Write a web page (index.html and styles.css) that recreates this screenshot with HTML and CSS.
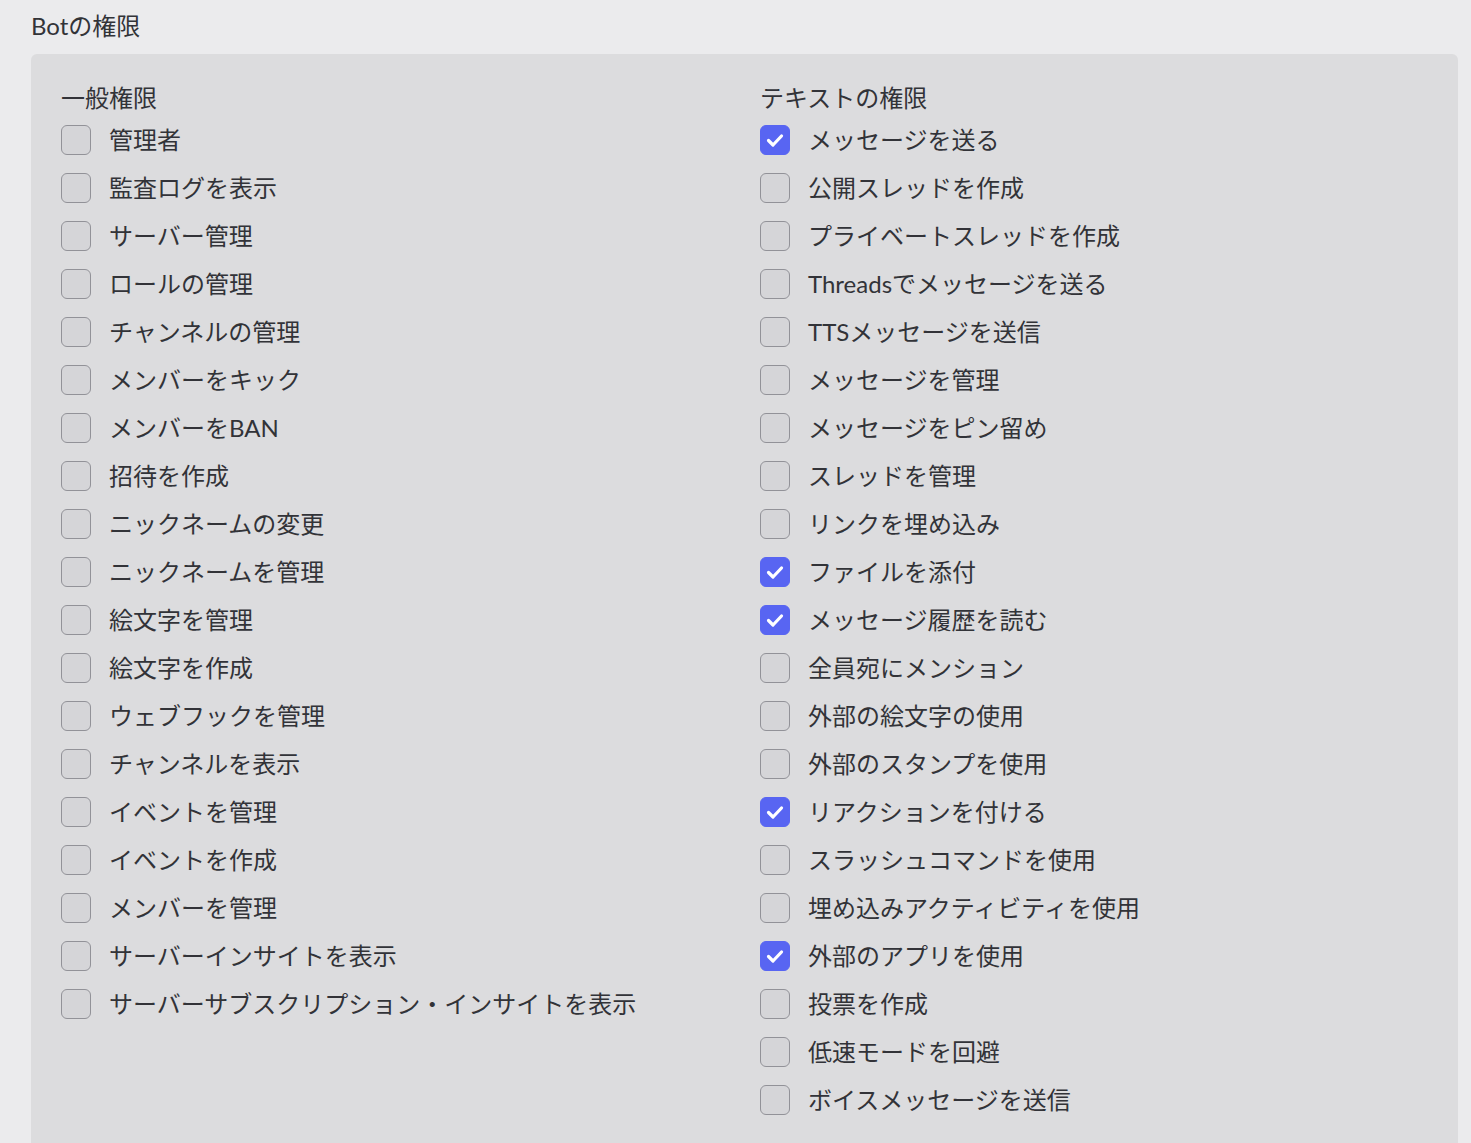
FILE: index.html
```html
<!DOCTYPE html>
<html lang="ja">
<head>
    <meta charset="UTF-8">
    <meta name="viewport" content="width=device-width, initial-scale=1.0">
    <title>Botの権限</title>
    <link rel="stylesheet" href="styles.css">
</head>
<body>
    <h2 class="title">Botの権限</h2>

    <div class="panel">
        <div class="column">
            <h3 class="column-title">一般権限</h3>
            <label class="perm"><input type="checkbox"><span>管理者</span></label>
            <label class="perm"><input type="checkbox"><span>監査ログを表示</span></label>
            <label class="perm"><input type="checkbox"><span>サーバー管理</span></label>
            <label class="perm"><input type="checkbox"><span>ロールの管理</span></label>
            <label class="perm"><input type="checkbox"><span>チャンネルの管理</span></label>
            <label class="perm"><input type="checkbox"><span>メンバーをキック</span></label>
            <label class="perm"><input type="checkbox"><span>メンバーをBAN</span></label>
            <label class="perm"><input type="checkbox"><span>招待を作成</span></label>
            <label class="perm"><input type="checkbox"><span>ニックネームの変更</span></label>
            <label class="perm"><input type="checkbox"><span>ニックネームを管理</span></label>
            <label class="perm"><input type="checkbox"><span>絵文字を管理</span></label>
            <label class="perm"><input type="checkbox"><span>絵文字を作成</span></label>
            <label class="perm"><input type="checkbox"><span>ウェブフックを管理</span></label>
            <label class="perm"><input type="checkbox"><span>チャンネルを表示</span></label>
            <label class="perm"><input type="checkbox"><span>イベントを管理</span></label>
            <label class="perm"><input type="checkbox"><span>イベントを作成</span></label>
            <label class="perm"><input type="checkbox"><span>メンバーを管理</span></label>
            <label class="perm"><input type="checkbox"><span>サーバーインサイトを表示</span></label>
            <label class="perm"><input type="checkbox"><span>サーバーサブスクリプション・インサイトを表示</span></label>
        </div>

        <div class="column">
            <h3 class="column-title">テキストの権限</h3>
            <label class="perm"><input type="checkbox" checked><span>メッセージを送る</span></label>
            <label class="perm"><input type="checkbox"><span>公開スレッドを作成</span></label>
            <label class="perm"><input type="checkbox"><span>プライベートスレッドを作成</span></label>
            <label class="perm"><input type="checkbox"><span>Threadsでメッセージを送る</span></label>
            <label class="perm"><input type="checkbox"><span>TTSメッセージを送信</span></label>
            <label class="perm"><input type="checkbox"><span>メッセージを管理</span></label>
            <label class="perm"><input type="checkbox"><span>メッセージをピン留め</span></label>
            <label class="perm"><input type="checkbox"><span>スレッドを管理</span></label>
            <label class="perm"><input type="checkbox"><span>リンクを埋め込み</span></label>
            <label class="perm"><input type="checkbox" checked><span>ファイルを添付</span></label>
            <label class="perm"><input type="checkbox" checked><span>メッセージ履歴を読む</span></label>
            <label class="perm"><input type="checkbox"><span>全員宛にメンション</span></label>
            <label class="perm"><input type="checkbox"><span>外部の絵文字の使用</span></label>
            <label class="perm"><input type="checkbox"><span>外部のスタンプを使用</span></label>
            <label class="perm"><input type="checkbox" checked><span>リアクションを付ける</span></label>
            <label class="perm"><input type="checkbox"><span>スラッシュコマンドを使用</span></label>
            <label class="perm"><input type="checkbox"><span>埋め込みアクティビティを使用</span></label>
            <label class="perm"><input type="checkbox" checked><span>外部のアプリを使用</span></label>
            <label class="perm"><input type="checkbox"><span>投票を作成</span></label>
            <label class="perm"><input type="checkbox"><span>低速モードを回避</span></label>
            <label class="perm"><input type="checkbox"><span>ボイスメッセージを送信</span></label>
        </div>
    </div>
</body>
</html>
```

FILE: styles.css
```css
body {
    margin: 0;
    padding: 12px 13px 0 31px;
    background-color: #ebebed;
    color: #323338;
    font-family: Lato, "Noto Sans CJK JP", sans-serif;
    overflow: hidden;
    height: 1143px;
    box-sizing: border-box;
}
.title {
    margin: 0 0 14px;
    font-size: 24px;
    font-weight: normal;
    line-height: 28px;
}
.panel {
    display: grid;
    grid-template-columns: 699px 1fr;
    padding: 30px 30px 60px;
    background-color: #dcdcde;
    border-radius: 6px 6px 0 0;
}
.column-title {
    margin: 0 0 4px;
    font-size: 24px;
    font-weight: normal;
    line-height: 28px;
}
.perm {
    display: flex;
    align-items: center;
    height: 48px;
    font-size: 24px;
    cursor: pointer;
}
.perm span {
    margin-bottom: 3px;
}
.perm input {
    appearance: none;
    width: 30px;
    height: 30px;
    margin: 0 18px 0 0;
    border: 1px solid #929298;
    border-radius: 6px;
    background-color: #d5d5d8;
    box-sizing: border-box;
    cursor: pointer;
    flex-shrink: 0;
}
.perm input:checked {
    border-color: #5865f2;
    background-color: #5865f2;
    background-image: url("data:image/svg+xml,%3Csvg xmlns='http://www.w3.org/2000/svg' viewBox='0 0 30 30'%3E%3Cpath d='M8.5 15.5l4.5 4.5 8.5-9' fill='none' stroke='white' stroke-width='3.2' stroke-linecap='round' stroke-linejoin='round'/%3E%3C/svg%3E");
    background-size: 30px 30px;
    background-position: center;
}
```
